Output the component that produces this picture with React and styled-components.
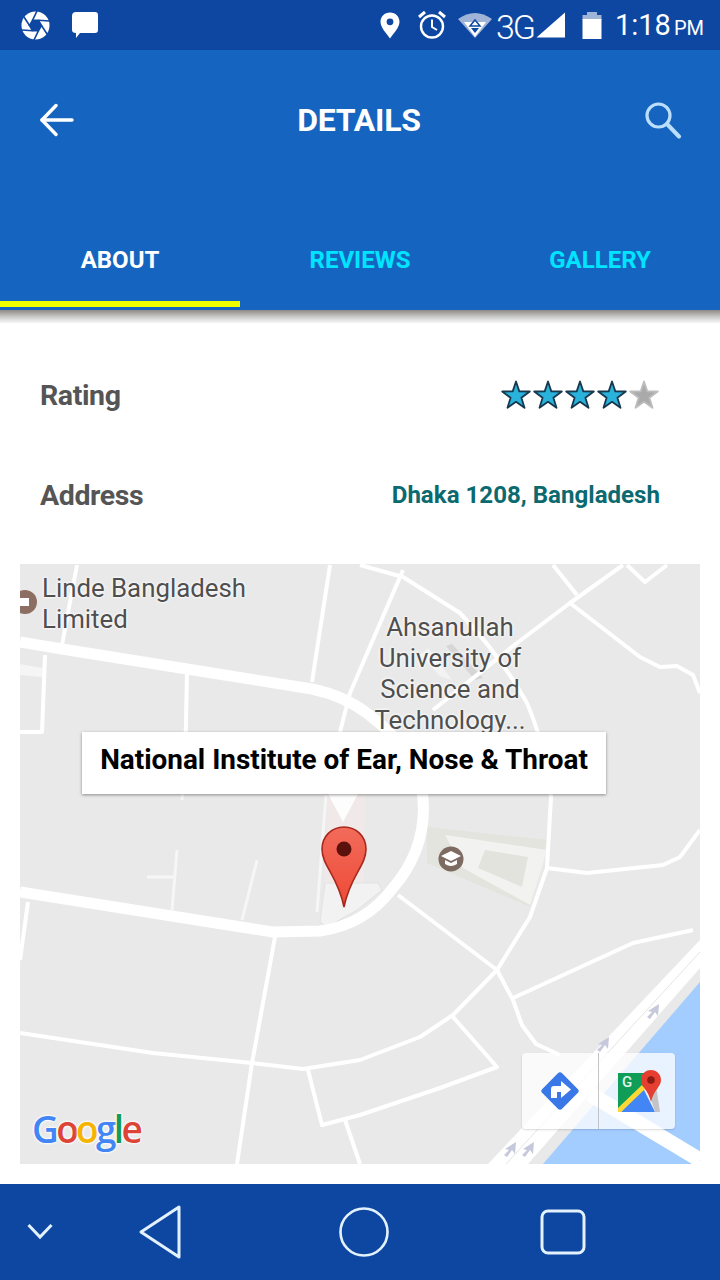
import React from "react";
import styled, { createGlobalStyle } from "styled-components";

const GlobalStyle = createGlobalStyle`
  html, body {
    margin: 0;
    padding: 0;
    background: #fff;
  }
  body {
    font-family: Roboto, "Liberation Sans", sans-serif;
  }
`;

const Page = styled.div`
  width: 720px;
  height: 1280px;
  display: flex;
  flex-direction: column;
  overflow: hidden;
  background: #fff;
`;

const StatusBar = styled.div`
  height: 50px;
  flex: none;
  display: flex;
  align-items: center;
  justify-content: space-between;
  padding: 0 16px 0 21px;
  box-sizing: border-box;
  background: #0d47a1;
  color: #fff;
`;

const StatusGroup = styled.div`
  display: flex;
  align-items: center;
  gap: ${(p) => p.$gap || 0}px;
`;

const StatusGap = styled.div`
  width: ${(p) => p.$size}px;
`;

const NetworkText = styled.span`
  font-size: 34px;
  font-weight: 300;
  letter-spacing: -2px;
  line-height: 50px;
  padding-top: 3px;
  margin: 0 2px 0 4px;
`;

const Clock = styled.span`
  font-size: 29px;
  line-height: 50px;
  padding-top: 3px;
  margin-left: 13px;
`;

const Meridiem = styled.span`
  font-size: 20px;
  margin-left: 3px;
`;

const Header = styled.div`
  height: 260px;
  flex: none;
  display: flex;
  flex-direction: column;
  background: #1565c0;
`;

const Toolbar = styled.div`
  height: 140px;
  display: flex;
  align-items: center;
  justify-content: space-between;
  padding: 0 38px 0 40px;
`;

const Title = styled.div`
  color: #fff;
  font-size: 32px;
  font-weight: 700;
  letter-spacing: -0.2px;
`;

const Tabs = styled.div`
  height: 117px;
  display: flex;
`;

const Tab = styled.div`
  flex: 1;
  box-sizing: border-box;
  padding-top: 50px;
  text-align: center;
  font-size: 24px;
  line-height: 40px;
  font-weight: 700;
  color: ${(p) => (p.$active ? "#fff" : "#00e5ff")};
  border-bottom: 6px solid ${(p) => (p.$active ? "#eeff00" : "transparent")};
`;

const HeaderShadow = styled.div`
  height: 13px;
  flex: none;
  background: linear-gradient(#8f8a86, #b5b5b2 35%, #dcdcdc 70%, #f6f6f6);
`;

const Rows = styled.div`
  padding-top: 22px;
`;

const Row = styled.div`
  height: 100px;
  display: flex;
  align-items: center;
  justify-content: space-between;
  padding: 0 60px 0 40px;
`;

const Label = styled.div`
  color: #555;
  font-size: 28.5px;
  font-weight: 700;
  letter-spacing: -0.4px;
`;

const Value = styled.div`
  color: #0b6a70;
  font-size: 24.1px;
  font-weight: 700;
`;

const Stars = styled.div`
  display: flex;
`;

const MapBox = styled.div`
  position: relative;
  height: 600px;
  margin: 19px 20px 0;
  overflow: hidden;
  background: #e9e9e9;
`;

const MapDrawing = styled.svg`
  display: block;
`;

const PlaceLabel = styled.div`
  position: absolute;
  left: ${(p) => p.$left}px;
  top: ${(p) => p.$top}px;
  width: ${(p) => p.$width}px;
  color: #4f4f4f;
  font-size: 25.8px;
  line-height: 31px;
  text-align: ${(p) => p.$align || "left"};
  text-shadow: 0 0 3px #fff, 0 0 3px #fff;
`;

const InfoWindow = styled.div`
  position: absolute;
  left: 62px;
  top: 168px;
  width: 524px;
  height: 62px;
  background: #fff;
  box-shadow: 0 1px 3px rgba(0, 0, 0, 0.4);
  color: #000;
  font-size: 27.9px;
  font-weight: 700;
  line-height: 56px;
  text-align: center;
`;

const InfoTail = styled.div`
  position: absolute;
  left: 308px;
  top: 230px;
  width: 30px;
  height: 28px;
  background: #fff;
  opacity: 0.9;
  clip-path: polygon(0 0, 100% 0, 50% 100%);
`;

const Marker = styled.div`
  position: absolute;
  left: 301px;
  top: 262px;
  line-height: 0;
`;

const GoogleMark = styled.div`
  position: absolute;
  left: 12px;
  top: 541px;
  font-family: "Open Sans", Roboto, sans-serif;
  font-size: 37px;
  font-weight: 600;
  line-height: 48px;
  letter-spacing: -2.7px;
  text-shadow: 0 0 3px #fff, 0 0 3px #fff, 0 0 2px #fff;
`;

const GoogleLetter = styled.span`
  color: ${(p) => p.$color};
`;

const MapActions = styled.div`
  position: absolute;
  left: 502px;
  top: 489px;
  display: flex;
  border-radius: 4px;
  overflow: hidden;
  box-shadow: 0 1px 2px rgba(0, 0, 0, 0.15);
`;

const MapAction = styled.div`
  width: 76px;
  height: 76px;
  display: flex;
  align-items: center;
  justify-content: center;
  background: rgba(255, 255, 255, 0.76);
  & + & {
    border-left: 1px solid #c4c4c4;
    width: 77px;
    padding-left: 5px;
    box-sizing: border-box;
  }
`;

const NavBar = styled.div`
  height: 96px;
  flex: none;
  margin-top: auto;
  box-sizing: border-box;
  padding-left: 26px;
  display: grid;
  grid-template-columns: 113px 200px 201px auto;
  align-items: center;
  background: #0d47a1;
`;

const thick = [
  "M20 642 L62 649 L187 669 L312 689 Q345 696 368 714 Q410 745 422 790 Q430 845 393 888 Q365 925 320 931 L273 932 L20 892",
];

const medium = [
  "M20 1033 L153 1053 L252 1063 L303 1069 L360 1060 L420 1037 L453 1015 L497 970 L530 917 L547 868 L551 797 Q545 745 527 703 Q500 655 460 613 L403 577 L360 565",
  "M398 895 L497 970",
  "M497 970 L513 1000 L522 1025 L536 1044 L560 1055",
  "M513 998 L633 943 L693 930",
  "M453 1017 L497 1067 L440 1088 L360 1115 L322 1125 L308 1070",
  "M275 937 L252 1063 L237 1164",
  "M433 710 L517 643 L570 603 L623 565",
  "M553 565 L577 595",
  "M570 603 L640 657 L660 667 L677 666 L693 675 L700 693",
  "M627 565 L645 582 L667 565",
  "M403 570 L350 693 L340 732",
  "M330 565 L312 682",
  "M77 565 L62 645",
  "M187 672 L185 770",
  "M45 655 L42 732 L20 732",
  "M28 902 L20 960",
  "M345 1120 L360 1164",
  "M547 868 L587 873 L663 865 L680 857 L700 830",
];

const faint = [
  "M185 770 L182 800",
  "M177 850 L172 910",
  "M147 877 L173 877",
  "M257 860 L242 920",
  "M326 795 L317 912",
];

const arrows = [
  [653, 1010],
  [603, 1043],
  [510, 1148],
  [528, 1148],
];

const Star = ({ on }) => (
  <svg width="32" height="32" viewBox="0 0 32 32">
    <path
      d="M16 2.5 L19.3 12.4 L29.8 12.5 L21.4 18.8 L24.5 28.8 L16 22.8 L7.5 28.8 L10.6 18.8 L2.2 12.5 L12.7 12.4 Z"
      fill={on ? "#29b3dc" : "#aaaaaa"}
      stroke={on ? "#17384d" : "#bdbdbd"}
      strokeWidth="1.8"
      strokeLinejoin="round"
    />
  </svg>
);

const ShutterIcon = () => (
  <svg width="29" height="29" viewBox="0 0 29 29">
    <circle cx="14.5" cy="14.5" r="14" fill="#fff" />
    <g stroke="#0d47a1" strokeWidth="1.6">
      <path d="M11.5 9.3 L16 0" />
      <path d="M17.5 9.3 L28 10" />
      <path d="M20.5 14.5 L26 23" />
      <path d="M17.5 19.7 L13 29" />
      <path d="M11.5 19.7 L1 19" />
      <path d="M8.5 14.5 L3 6" />
      <path d="M11.5 9.3 L17.5 9.3 L20.5 14.5 L17.5 19.7 L11.5 19.7 L8.5 14.5 Z" fill="#0d47a1" />
    </g>
  </svg>
);

const ChatIcon = () => (
  <svg width="28" height="28" viewBox="0 0 28 28">
    <path
      d="M5 1 H24 Q27 1 27 4 V19 Q27 22 24 22 H9 L5 27 V22 Q1 22 1 19 V5 Q1 1 5 1 Z"
      fill="#fff"
    />
  </svg>
);

const LocationIcon = () => (
  <svg width="20" height="27" viewBox="0 0 20 27">
    <path
      d="M10 0.5 C4.5 0.5 0.5 4.6 0.5 9.8 C0.5 16 7 22 10 26.5 C13 22 19.5 16 19.5 9.8 C19.5 4.6 15.5 0.5 10 0.5 Z"
      fill="#fff"
    />
    <circle cx="10" cy="9.8" r="3.4" fill="#0d47a1" />
  </svg>
);

const AlarmIcon = () => (
  <svg width="30" height="30" viewBox="0 0 30 30" fill="none" stroke="#fff">
    <circle cx="15" cy="16.5" r="11" strokeWidth="2.4" />
    <path d="M15 9.5 V17 L20 20" strokeWidth="2" />
    <path d="M2 7 L8 2 M22 2 L28 7" strokeWidth="3" />
  </svg>
);

const WifiIcon = () => (
  <svg width="34" height="26" viewBox="0 0 34 26">
    <path d="M0 7 Q17 -5 34 7 L17 26 Z" fill="#9fb4d6" />
    <path d="M6 10 H28 L17 25 Z" fill="#fff" />
    <path d="M17 8 L22 14 H12 Z" fill="#fff" stroke="#0d47a1" strokeWidth="1.5" />
    <path d="M13 16 H21 L17 21 Z" fill="#0d47a1" />
  </svg>
);

const SignalIcon = () => (
  <svg width="30" height="26" viewBox="0 0 30 26">
    <path d="M29 0.5 V25.5 H0.5 Z" fill="#fff" />
  </svg>
);

const BatteryIcon = () => (
  <svg width="20" height="27" viewBox="0 0 20 27">
    <rect x="5" y="0" width="10" height="4" fill="#9fb4d6" />
    <rect x="0.5" y="3" width="19" height="5" fill="#9fb4d6" />
    <rect x="0.5" y="7" width="19" height="20" fill="#fff" />
  </svg>
);

const BackIcon = () => (
  <svg width="34" height="34" viewBox="0 0 34 34" fill="none" stroke="#fff" strokeWidth="3.4" strokeLinecap="round">
    <path d="M2 17 H32" />
    <path d="M16 2.5 L2 17 L16 31.5" strokeLinejoin="round" />
  </svg>
);

const SearchIcon = () => (
  <svg width="38" height="38" viewBox="0 0 38 38" fill="none" stroke="#bbdefb" strokeLinecap="round">
    <circle cx="14.5" cy="14.5" r="11.5" strokeWidth="3.2" />
    <path d="M23 23 L35 35.5" strokeWidth="4" />
  </svg>
);

const MapLines = () => (
  <MapDrawing width="680" height="600" viewBox="20 564 680 600">
    <rect x="20" y="564" width="680" height="600" fill="#e9e9e9" />

    {/* water and motorway */}
    <path d="M700 982 L543 1164 L700 1164 Z" fill="#a3ccff" />
    <path d="M700 940 L488 1164 L528 1164 L700 968 Z" fill="#fff" />
    <path d="M506 1164 L700 952" stroke="#e4e4e4" strokeWidth="1" fill="none" />
    <path d="M590 1094 L700 1160" stroke="#fff" strokeWidth="15" fill="none" />
    <path d="M675 1142 L696 1164 L700 1164" stroke="#fff" strokeWidth="6" fill="none" />

    {/* buildings */}
    <path d="M327 795 H365 L364 884 H325 Z" fill="#f1e9e9" />
    <path d="M325 883 H378 L382 890 L357 910 L327 927 L320 922 Z" fill="#f2f2f2" stroke="#e2e2e2" />
    <path d="M427 827 L547 840 L530 907 L427 863 Z" fill="#e3e4dd" />
    <path d="M445 835 L547 850 L530 905 L463 868 Z" fill="#f2f2f0" />
    <path d="M485 850 L528 857 L522 887 L478 868 Z" fill="#e2e3dc" />
    <path d="M428 648 L452 680 L440 676 L420 655 Z" fill="#f3f3f3" />
    <path d="M446 646 L452 644 L483 678 L475 680 Z" fill="#d6d6d6" />
    <path d="M20 664 L43 668 L42 677 L20 675 Z" fill="#f5f5f5" />

    {/* roads */}
    {faint.map((d) => (
      <path key={d} d={d} fill="none" stroke="#f6f6f6" strokeWidth="3" />
    ))}
    {medium.map((d) => (
      <path key={d} d={d} fill="none" stroke="#fff" strokeWidth="4" strokeLinejoin="round" />
    ))}
    {thick.map((d) => (
      <path key={d} d={d} fill="none" stroke="#fff" strokeWidth="11" strokeLinejoin="round" />
    ))}

    {/* one way arrows */}
    {arrows.map(([x, y]) => (
      <path
        key={x + "-" + y}
        d="M-6 7 L-1 2 L-5 1 L6 -6 L5 6 L2 2 L-3 9 Z"
        transform={`translate(${x} ${y})`}
        fill="#c6c9dc"
      />
    ))}

    {/* place icons */}
    <circle cx="25" cy="602" r="12" fill="#8d6e63" />
    <rect x="20" y="598" width="9" height="8" fill="#fff" />
    <circle cx="451" cy="859" r="12.5" fill="#7d6a60" />
    <path d="M441 856 L451 851 L461 856 L451 861 Z" fill="#fff" />
    <path d="M445 860 L451 863 L457 860 V864 Q451 868 445 864 Z" fill="#fff" />
  </MapDrawing>
);

const PinIcon = () => (
  <svg width="46" height="83" viewBox="0 0 46 83">
    <defs>
      <linearGradient id="pinFill" x1="0" y1="0" x2="0" y2="1">
        <stop offset="0" stopColor="#f26b5b" />
        <stop offset="1" stopColor="#ee4a35" />
      </linearGradient>
    </defs>
    <path
      d="M23 1 C10.5 1 1 10.5 1 23 C1 40 17 50 23 81 C29 50 45 40 45 23 C45 10.5 35.5 1 23 1 Z"
      fill="url(#pinFill)"
      stroke="#a8281c"
      strokeWidth="1.6"
    />
    <circle cx="23" cy="23" r="7.5" fill="#5b120c" />
  </svg>
);

const DirectionsIcon = () => (
  <svg width="42" height="42" viewBox="0 0 42 42">
    <rect x="7" y="7" width="28" height="28" rx="3" transform="rotate(45 21 21)" fill="#3b78e7" />
    <path
      d="M12 28 V19 Q12 16 15 16 H22 V11 L32 19.5 L22 28 V22 H18 V28 Z"
      fill="#fff"
    />
  </svg>
);

const MapsIcon = () => (
  <svg width="43" height="43" viewBox="0 0 43 43">
    <path d="M0 3 H26 V17 L0 40 Z" fill="#0f9d58" />
    <path d="M3 42 L25 18 L37 42 Z" fill="#4285f4" />
    <path d="M0 38 L24 15 L27 19 L3 42 H0 Z" fill="#fdd835" />
    <path d="M37 42 L30 20 L38 16 L42 42 Z" fill="#c4c4c4" />
    <path
      d="M33 0 C27 0 23 4.5 23 10 C23 17 30.5 20 33 32 C35.5 20 43 17 43 10 C43 4.5 39 0 33 0 Z"
      fill="#e53f32"
    />
    <circle cx="33" cy="10" r="3.8" fill="#8c1a10" />
    <text x="4" y="17" fontFamily="Roboto, sans-serif" fontSize="15" fontWeight="500" fill="#dff5e8">
      G
    </text>
  </svg>
);

const App = () => {
  return (
    <Page>
      <GlobalStyle />
      <StatusBar>
        <StatusGroup $gap={21}>
          <ShutterIcon />
          <ChatIcon />
        </StatusGroup>
        <StatusGroup>
          <LocationIcon />
          <StatusGap $size={17} />
          <AlarmIcon />
          <StatusGap $size={11} />
          <WifiIcon />
          <NetworkText>3G</NetworkText>
          <SignalIcon />
          <StatusGap $size={16} />
          <BatteryIcon />
          <Clock>
            1:18<Meridiem>PM</Meridiem>
          </Clock>
        </StatusGroup>
      </StatusBar>

      <Header>
        <Toolbar>
          <BackIcon />
          <Title>DETAILS</Title>
          <SearchIcon />
        </Toolbar>
        <Tabs>
          <Tab $active>ABOUT</Tab>
          <Tab>REVIEWS</Tab>
          <Tab>GALLERY</Tab>
        </Tabs>
      </Header>
      <HeaderShadow />

      <Rows>
        <Row>
          <Label>Rating</Label>
          <Stars>
            {[true, true, true, true, false].map((on, i) => (
              <Star key={i} on={on} />
            ))}
          </Stars>
        </Row>
        <Row>
          <Label>Address</Label>
          <Value>Dhaka 1208, Bangladesh</Value>
        </Row>
      </Rows>

      <MapBox>
        <MapLines />
        <PlaceLabel $left={22} $top={9} $width={240}>
          Linde Bangladesh
          <br />
          Limited
        </PlaceLabel>
        <PlaceLabel $left={310} $top={48} $width={240} $align="center">
          Ahsanullah
          <br />
          University of
          <br />
          Science and
          <br />
          Technology...
        </PlaceLabel>
        <InfoTail />
        <InfoWindow>National Institute of Ear, Nose &amp; Throat</InfoWindow>
        <Marker>
          <PinIcon />
        </Marker>
        <GoogleMark>
          <GoogleLetter $color="#4285f4">G</GoogleLetter>
          <GoogleLetter $color="#db4437">o</GoogleLetter>
          <GoogleLetter $color="#f4b400">o</GoogleLetter>
          <GoogleLetter $color="#4285f4">g</GoogleLetter>
          <GoogleLetter $color="#0f9d58">l</GoogleLetter>
          <GoogleLetter $color="#db4437">e</GoogleLetter>
        </GoogleMark>
        <MapActions>
          <MapAction>
            <DirectionsIcon />
          </MapAction>
          <MapAction>
            <MapsIcon />
          </MapAction>
        </MapActions>
      </MapBox>

      <NavBar>
        <svg width="28" height="20" viewBox="0 0 28 20" fill="none" stroke="#e3f2fd" strokeWidth="3">
          <path d="M2.5 3 L14 15 L25.5 3" />
        </svg>
        <svg width="42" height="54" viewBox="0 0 42 54" fill="none" stroke="#e3f2fd" strokeWidth="3" strokeLinejoin="round">
          <path d="M40 2 V52 L2 27 Z" />
        </svg>
        <svg width="50" height="50" viewBox="0 0 50 50" fill="none" stroke="#e3f2fd" strokeWidth="2.6">
          <circle cx="25" cy="25" r="23.5" />
        </svg>
        <svg width="46" height="46" viewBox="0 0 46 46" fill="none" stroke="#e3f2fd" strokeWidth="3">
          <rect x="2" y="2" width="42" height="42" rx="6" />
        </svg>
      </NavBar>
    </Page>
  );
};

export default App;
